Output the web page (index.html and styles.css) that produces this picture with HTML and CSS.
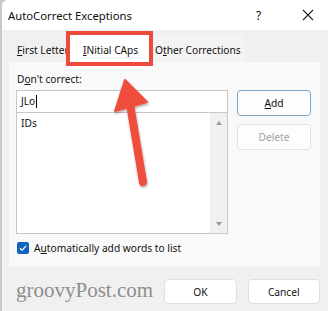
FILE: index.html
```html
<!DOCTYPE html>
<html lang="en">
<head>
    <meta charset="UTF-8">
    <title>AutoCorrect Exceptions</title>
    <link rel="stylesheet" href="styles.css">
</head>
<body>
    <div class="window">
        <!-- Title bar -->
        <div class="titlebar">
            <span class="title">AutoCorrect Exceptions</span>
            <span class="help">?</span>
            <span class="close">
                <svg width="12" height="12" viewBox="0 0 12 12"><path d="M1 1 L11 11 M11 1 L1 11" stroke="#222" stroke-width="1.1"/></svg>
            </span>
        </div>

        <!-- Tabs -->
        <div class="tabs">
            <span class="tab first"><u>F</u>irst Letter</span>
            <span class="tab active"><u>I</u>Nitial CAps</span>
            <span class="tab other">O<u>t</u>her Corrections</span>
        </div>

        <!-- Tab panel -->
        <div class="panel">
            <div class="label">D<u>o</u>n't correct:</div>
            <div class="edit-row">
                <div class="lists">
                    <div class="input">JLo<span class="caret"></span></div>
                    <div class="listbox">
                        <div class="items">IDs</div>
                        <div class="scrollbar">
                            <span class="arrow up"></span>
                            <span class="arrow down"></span>
                        </div>
                    </div>
                </div>
                <div class="side-buttons">
                    <div class="btn add"><u>A</u>dd</div>
                    <div class="btn disabled">Delete</div>
                </div>
            </div>
            <div class="check-row">
                <span class="checkbox">
                    <svg width="12" height="12" viewBox="0 0 12 12"><path d="M3 6.2 L5.1 8.2 L9.2 3.8" fill="none" stroke="#fff" stroke-width="1.2"/></svg>
                </span>
                <span>A<u>u</u>tomatically add words to list</span>
            </div>
        </div>

        <!-- Footer -->
        <div class="footer">
            <span class="watermark">groovyPost.com</span>
            <div class="btn footer-btn">OK</div>
            <div class="btn footer-btn">Cancel</div>
        </div>
    </div>

    <!-- Annotation arrow -->
    <svg class="pointer" width="328" height="311" viewBox="0 0 328 311">
        <defs>
            <filter id="shade" x="-20%" y="-20%" width="140%" height="140%">
                <feDropShadow dx="0.5" dy="1.5" stdDeviation="1" flood-color="#000" flood-opacity="0.35"/>
            </filter>
        </defs>
        <g filter="url(#shade)">
            <line x1="143" y1="182" x2="130" y2="104" stroke="#ef4e3c" stroke-width="8" stroke-linecap="round"/>
            <polygon points="125,80 147,102 115,111" fill="#ef4e3c" stroke="#ef4e3c" stroke-width="2" stroke-linejoin="round"/>
        </g>
    </svg>
</body>
</html>
```

FILE: styles.css
```css
body {
    margin: 0;
    width: 328px;
    height: 311px;
    overflow: hidden;
    position: relative;
    font-family: "Noto Sans", Arial, sans-serif;
    font-size: 10.2px;
    color: #111;
    background-color: #c9c9c9;
}
.window {
    margin-left: 2px;
    height: 311px;
    background-color: #f0f0f0;
    border-top-left-radius: 6px;
    display: flex;
    flex-direction: column;
}
.titlebar {
    height: 30px;
    background-color: #fff;
    border-top-left-radius: 6px;
    display: flex;
    align-items: center;
    padding-left: 6px;
}
.titlebar .title {
    flex-grow: 1;
    font-size: 11.3px;
}
.titlebar .help {
    font-size: 12px;
    width: 46px;
}
.titlebar .close {
    width: 26px;
    display: flex;
}
.tabs {
    display: flex;
    align-items: flex-end;
    height: 32px;
    padding-left: 7px;
}
.tab {
    height: 27px;
    line-height: 30px;
    box-sizing: border-box;
}
.tab.first {
    width: 61px;
    padding-left: 8px;
    overflow: hidden;
    white-space: nowrap;
}
.tab.active {
    background-color: #fff;
    width: 79px;
    padding-left: 13px;
    outline: 4px solid #eb4a3d;
    position: relative;
    z-index: 1;
}
.tab.other {
    background-color: #f3f3f3;
    width: 96px;
    padding-left: 6px;
    white-space: nowrap;
}
.panel {
    margin: 0 8px 0 7px;
    height: 205px;
    background-color: #f9f9f9;
    padding: 9px 7px 0 7px;
    box-sizing: border-box;
}
.label {
    padding-left: 1px;
    height: 19px;
    line-height: 16px;
}
.edit-row {
    display: flex;
    gap: 9px;
}
.lists {
    width: 212px;
}
.input {
    height: 21px;
    border: 1px solid #c7c7c7;
    background-color: #fff;
    line-height: 21px;
    padding-left: 4px;
    display: flex;
    align-items: center;
}
.caret {
    width: 1px;
    height: 13px;
    background-color: #000;
    margin-left: 1px;
}
.listbox {
    height: 120px;
    border: 1px solid #c7c7c7;
    border-top: none;
    background-color: #fff;
    display: flex;
}
.items {
    flex-grow: 1;
    padding: 3px 0 0 4px;
}
.scrollbar {
    width: 17px;
    background-color: #f0f0f0;
    display: flex;
    flex-direction: column;
    justify-content: space-between;
    align-items: center;
    padding: 8px 0 7px;
}
.arrow {
    width: 0;
    height: 0;
    border-left: 3px solid transparent;
    border-right: 3px solid transparent;
}
.arrow.up {
    border-bottom: 4px solid #9a9a9a;
}
.arrow.down {
    border-top: 4px solid #9a9a9a;
}
.side-buttons {
    display: flex;
    flex-direction: column;
    gap: 8px;
}
.btn {
    width: 74px;
    height: 26px;
    box-sizing: border-box;
    border: 1px solid #d5d5d5;
    border-radius: 4px;
    background-color: #fdfdfd;
    text-align: center;
    line-height: 24px;
}
.btn.add {
    border-color: #7fa4c9;
}
.btn.disabled {
    color: #a2a2a2;
    border-color: #e3e3e3;
}
.check-row {
    display: flex;
    align-items: center;
    gap: 5px;
    margin-top: 7px;
    padding-left: 1px;
}
.checkbox {
    width: 12px;
    height: 12px;
    border-radius: 2px;
    background-color: #1164bd;
    display: flex;
}
.footer {
    flex-grow: 1;
    display: flex;
    align-items: center;
    gap: 11px;
    padding: 5px 8px 0 14px;
}
.watermark {
    flex-grow: 1;
    font-family: "Liberation Serif", "Times New Roman", serif;
    font-size: 21px;
    color: #8e8e8e;
    margin-bottom: 2px;
}
.footer-btn {
    width: 73px;
    height: 25px;
    border-color: #e0e0e0;
    background-color: #fff;
}
.pointer {
    position: absolute;
    left: 0;
    top: 0;
    pointer-events: none;
}
```
